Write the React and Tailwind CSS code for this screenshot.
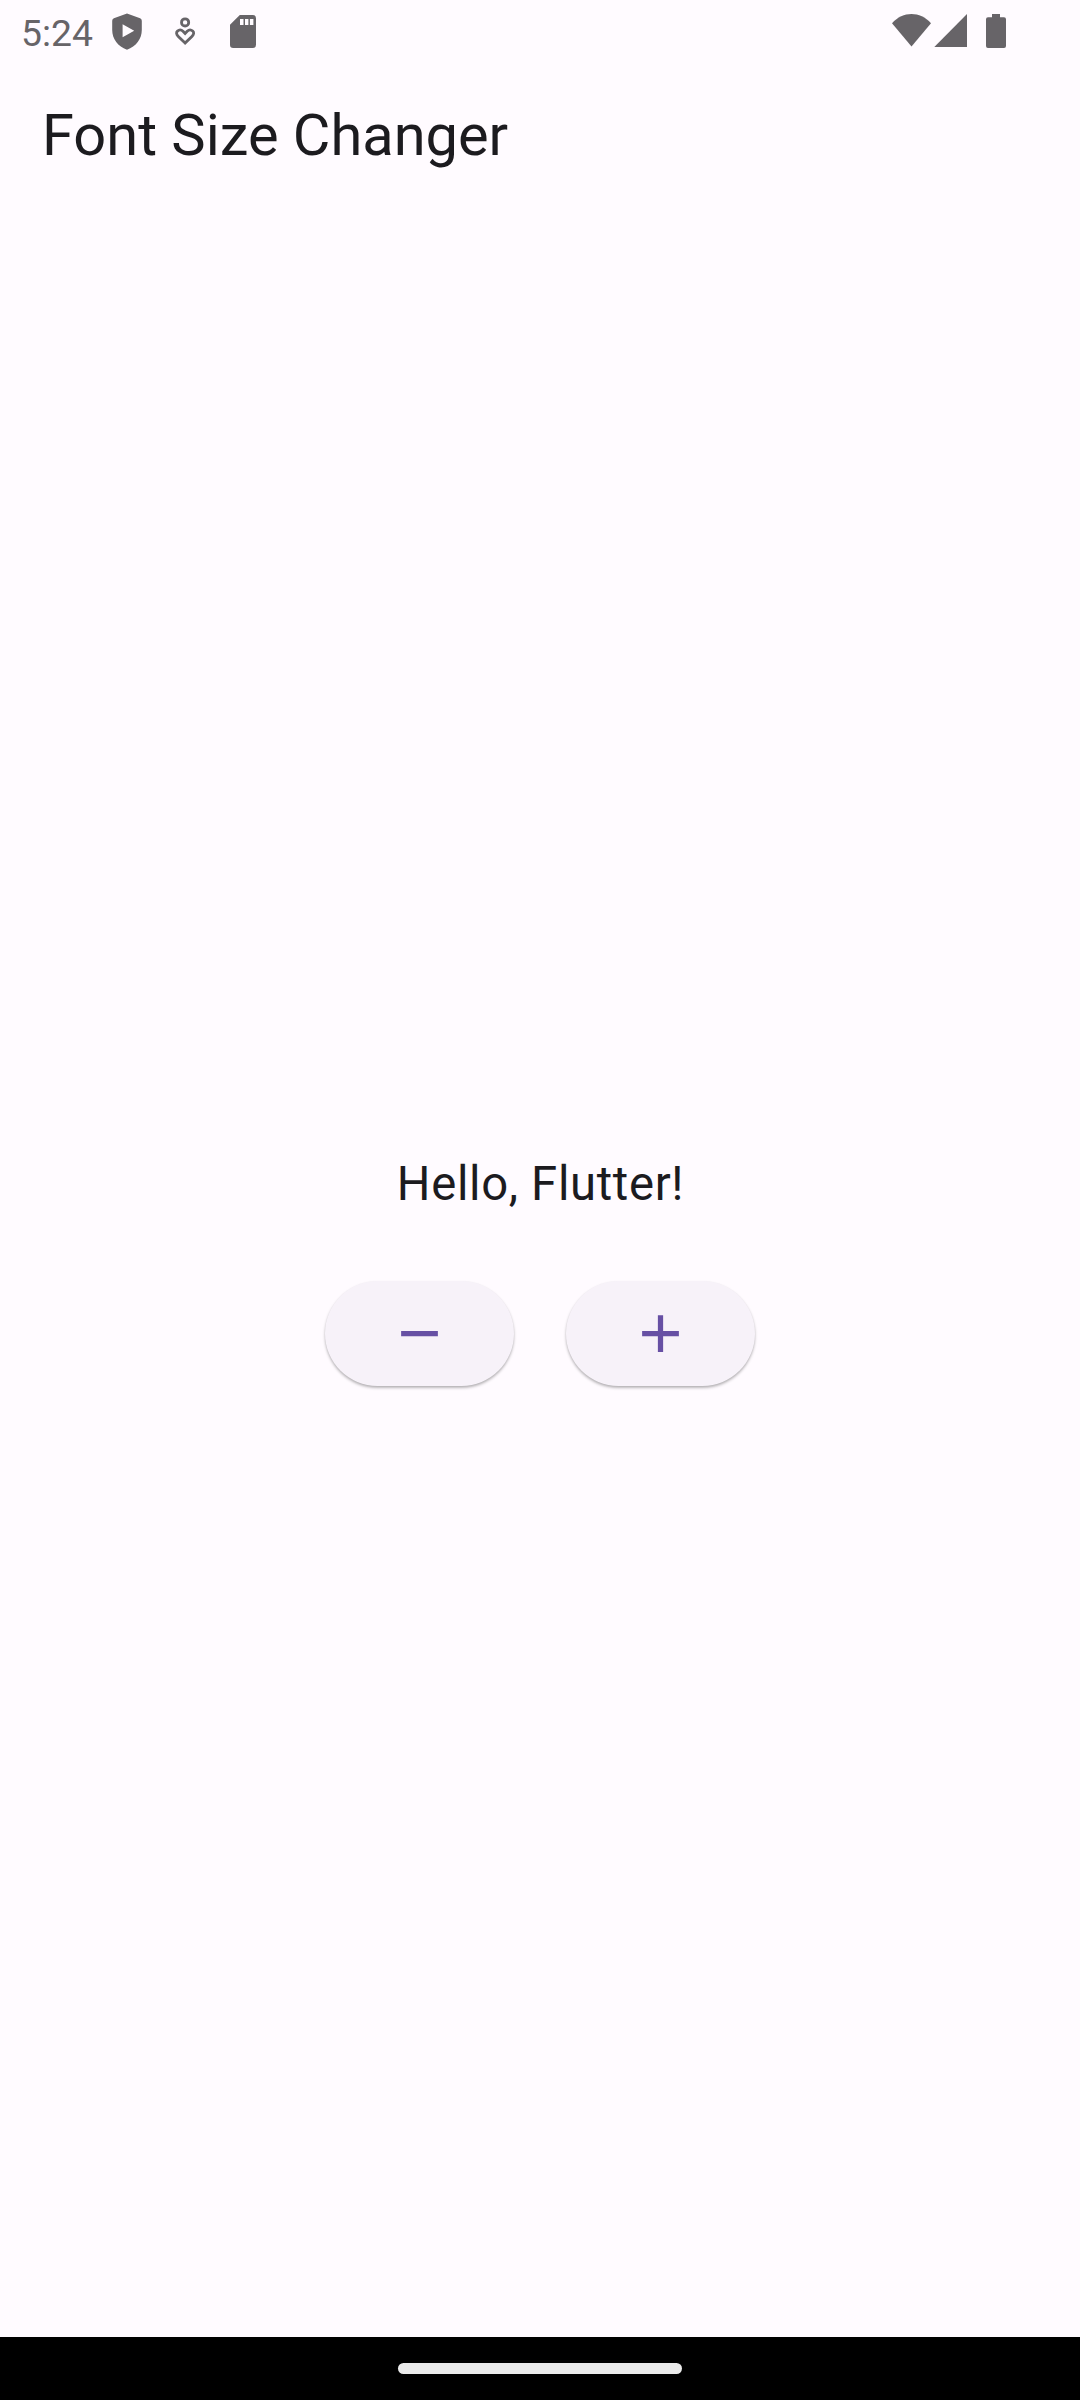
function StatusBar() {
  return (
    <header className="flex h-[63px] items-start text-[#676468]">
      <span className="ml-[21px] mt-[11px] w-[91px] text-[37.3px] leading-[44px]">5:24</span>
      {/* Play Protect shield */}
      <svg className="mt-[13px] h-[37px] w-[30px]" viewBox="0 0 30 37" fill="currentColor">
        <path fillRule="evenodd" d="M15 .6 28.1 5.3Q29.8 6 29.8 7.8V17C29.8 26 24 33.5 15 36.7 6 33.5.2 26 .2 17V7.8Q.2 6 1.9 5.3ZM10.6 11.3V24.3L22.2 17.8Z" />
      </svg>
      {/* Person with heart */}
      <svg className="ml-[32px] mt-[16px] h-[31px] w-[23px]" viewBox="174 16 23 31" fill="none" stroke="currentColor" strokeWidth="2.8">
        <circle cx="185.1" cy="22.4" r="3.6" />
        <path d="M185.1 43 178.3 36.4C176.1 34.2 176.1 32.4 177.5 31.1 179.1 29.6 181.4 29.7 183 31.3L185.1 33.5 187.2 31.3C188.8 29.7 191.1 29.6 192.7 31.1 194.1 32.4 194.1 34.2 191.9 36.4Z" />
      </svg>
      {/* SD card */}
      <svg className="ml-[33px] mt-[15px] h-[33px] w-[26px]" viewBox="0 0 26 33" fill="currentColor">
        <path fillRule="evenodd" d="M9.8 0H22.8Q26 0 26 3.2V29.8Q26 33 22.8 33H3.2Q0 33 0 29.8V9.8ZM10 4V10H13.5V4ZM15 4V10H18.4V4ZM19.9 4V10H23.4V4Z" />
      </svg>
      <div className="grow" />
      {/* Wi-Fi */}
      <svg className="mt-[14px] h-[33px] w-[39px]" viewBox="892 14 39 33" fill="currentColor">
        <path d="M892 23.2C903 11 920 11 931 23.2L911.5 46.6Z" />
      </svg>
      {/* Mobile signal */}
      <svg className="ml-[3px] mt-[14px] h-[33px] w-[33px]" viewBox="0 0 33 33" fill="currentColor">
        <path d="M33 0V33H.3Z" />
      </svg>
      {/* Battery */}
      <svg className="ml-[19px] mr-[74px] mt-[14px] h-[34px] w-[20px]" viewBox="0 0 20 34" fill="currentColor">
        <path d="M6 0H14V3.3H18Q20 3.3 20 5.3V32Q20 34 18 34H2Q0 34 0 32V5.3Q0 3.3 2 3.3H6Z" />
      </svg>
    </header>
  );
}

function PillButton({ label, d }) {
  return (
    <button
      aria-label={label}
      className="flex h-[105px] w-[189px] items-center justify-center rounded-full bg-[#f7f2f9] text-[#6750a4] shadow-[0_2px_3px_rgba(0,0,0,0.26),0_1px_2px_rgba(0,0,0,0.06)]"
    >
      <svg className="h-[63px] w-[63px]" viewBox="0 0 24 24" fill="currentColor">
        <path d={d} />
      </svg>
    </button>
  );
}

export default function App() {
  return (
    <div className="flex h-[2400px] w-[1080px] flex-col bg-[#fffbff] font-[Roboto,sans-serif] text-[#1c1b1f]">
      <StatusBar />
      <h1 className="ml-[42px] mt-[36px] text-[57.75px] leading-[73px]">Font Size Changer</h1>
      <main className="flex grow flex-col items-center">
        <p className="mt-[978px] pl-[1px] text-[47.25px] leading-[68px] tracking-[0.656px]">Hello, Flutter!</p>
        <div className="mt-[63px] flex gap-[52.5px]">
          <PillButton label="Decrease" d="M19 13H5v-2h14v2z" />
          <PillButton label="Increase" d="M19 13h-6v6h-2v-6H5v-2h6V5h2v6h6v2z" />
        </div>
      </main>
      <footer className="flex h-[63px] items-start justify-center bg-black">
        <div className="mt-[26px] h-[11px] w-[284px] rounded-full bg-[#ebebeb]" />
      </footer>
    </div>
  );
}
